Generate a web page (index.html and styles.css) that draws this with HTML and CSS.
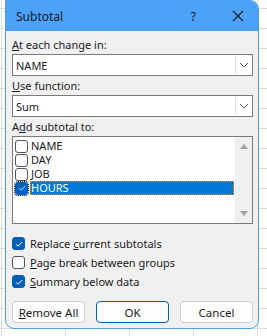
FILE: index.html
```html
<!DOCTYPE html>
<html lang="en">
<head>
    <meta charset="UTF-8">
    <title>Subtotal</title>
    <link rel="stylesheet" href="styles.css">
</head>
<body>
    <div class="dialog">
        <div class="titlebar">
            <span class="title">Subtotal</span>
            <span class="help">?</span>
            <svg class="close" width="12" height="12" viewBox="0 0 12 12"><path d="M1 1L11 11M11 1L1 11" stroke="#1a1a1a" stroke-width="1.2" fill="none"/></svg>
        </div>
        <div class="content">
            <div class="label"><u>A</u>t each change in:</div>
            <div class="select">
                <span class="value">NAME</span>
                <span class="arrow"><svg width="10" height="6" viewBox="0 0 10 6"><path d="M1 1L5 5L9 1" stroke="#555" fill="none"/></svg></span>
            </div>
            <div class="label"><u>U</u>se function:</div>
            <div class="select">
                <span class="value">Sum</span>
                <span class="arrow"><svg width="10" height="6" viewBox="0 0 10 6"><path d="M1 1L5 5L9 1" stroke="#555" fill="none"/></svg></span>
            </div>
            <div class="label">A<u>d</u>d subtotal to:</div>
            <div class="listbox">
                <div class="items">
                    <div class="item"><span class="box"></span><span class="text">NAME</span></div>
                    <div class="item"><span class="box"></span><span class="text">DAY</span></div>
                    <div class="item"><span class="box"></span><span class="text">JOB</span></div>
                    <div class="item selected"><span class="box checked"><svg width="10" height="10" viewBox="0 0 10 10"><path d="M2 5.2L4 7.2L8.2 3" stroke="#cfe3f7" stroke-width="1" fill="none"/></svg></span><span class="text">HOURS</span></div>
                </div>
                <div class="scrollbar">
                    <span class="up"></span>
                    <span class="down"></span>
                </div>
            </div>
            <div class="options">
                <div class="option"><span class="check on"><svg width="10" height="10" viewBox="0 0 10 10"><path d="M2 5.2L4 7.2L8.2 3" stroke="#fff" stroke-width="1" fill="none"/></svg></span><span>Replace <u>c</u>urrent subtotals</span></div>
                <div class="option"><span class="check"></span><span><u>P</u>age break between groups</span></div>
                <div class="option"><span class="check on"><svg width="10" height="10" viewBox="0 0 10 10"><path d="M2 5.2L4 7.2L8.2 3" stroke="#fff" stroke-width="1" fill="none"/></svg></span><span><u>S</u>ummary below data</span></div>
            </div>
            <div class="buttons">
                <button><u>R</u>emove All</button>
                <button class="default">OK</button>
                <button>Cancel</button>
            </div>
        </div>
    </div>
</body>
</html>
```

FILE: styles.css
```css
body {
    margin: 0;
    height: 336px;
    overflow: hidden;
    font-family: 'Noto Sans', sans-serif;
    font-size: 11px;
    color: #1a1a1a;
    background-color: #ffffff;
    background-image: linear-gradient(#dcdcdc 1px, transparent 1px), linear-gradient(90deg, #dcdcdc 1px, transparent 1px);
    background-size: 100% 20px, 64px 100%;
    background-position: 0 8px, -63px 0;
}
.dialog {
    margin-left: 5px;
    width: 252px;
    height: 327px;
    border: 1px solid #4a9ef2;
    border-radius: 0 9px 9px 9px;
    background-color: #f0f0f0;
    overflow: hidden;
}
.titlebar {
    height: 30px;
    background-color: #4ca1f8;
    display: flex;
    align-items: center;
    padding-left: 10px;
}
.title {
    flex: 1;
    font-size: 12px;
}
.help {
    font-size: 12px;
    margin-right: 36px;
}
.close {
    margin-right: 14px;
}
.content {
    padding: 5px 5px 0 6px;
}
.label {
    height: 17px;
    line-height: 17px;
    margin-bottom: 1px;
}
.select {
    height: 20px;
    border: 1px solid #7a7a7a;
    background: #fff;
    display: flex;
    align-items: center;
    margin-bottom: 1px;
}
.select .value {
    flex: 1;
    padding-left: 3px;
}
.select .arrow {
    width: 16px;
    height: 18px;
    border-left: 1px solid #e0e0e0;
    display: flex;
    align-items: center;
    justify-content: center;
}
.listbox {
    height: 86px;
    border: 1px solid #7a7a7a;
    background: #fff;
    display: flex;
}
.items {
    flex: 1;
    padding: 2px 1px 0 2px;
}
.item {
    height: 14px;
    display: flex;
    align-items: center;
}
.item .box {
    width: 13px;
    height: 13px;
    border: 1px solid #555;
    border-radius: 3px;
    box-sizing: border-box;
    margin-right: 2px;
    display: flex;
    align-items: center;
    justify-content: center;
}
.item .text {
    flex: 1;
    height: 14px;
    line-height: 14px;
    padding-left: 1px;
}
.item.selected .box {
    background: #005fb8;
    border-color: #005fb8;
    outline: 1px dotted #000;
}
.item.selected .text {
    background: #0078d7;
    color: #fff;
    outline: 1px dotted #f08a24;
    outline-offset: -1px;
}
.scrollbar {
    width: 17px;
    background: #f0f0f0;
    display: flex;
    flex-direction: column;
    justify-content: space-between;
    align-items: center;
    padding: 7px 0;
}
.scrollbar .up {
    border-left: 4px solid transparent;
    border-right: 4px solid transparent;
    border-bottom: 5px solid #a0a0a0;
}
.scrollbar .down {
    border-left: 4px solid transparent;
    border-right: 4px solid transparent;
    border-top: 5px solid #a0a0a0;
}
.options {
    padding-top: 10px;
}
.option {
    height: 19px;
    display: flex;
    align-items: center;
}
.check {
    width: 13px;
    height: 13px;
    box-sizing: border-box;
    border: 1px solid #555;
    border-radius: 3px;
    margin-right: 5px;
    display: flex;
    align-items: center;
    justify-content: center;
    background: #fff;
}
.check.on {
    background: #005fb8;
    border-color: #005fb8;
}
.buttons {
    display: flex;
    gap: 11px;
    margin-top: 10px;
}
button {
    width: 73px;
    height: 22px;
    font-family: 'Noto Sans', sans-serif;
    font-size: 11.5px;
    color: #1a1a1a;
    background: #fdfdfd;
    border: 1px solid #d0d0d0;
    border-radius: 4px;
    padding: 0;
}
button.default {
    border: 1px solid #005fb8;
}
```
